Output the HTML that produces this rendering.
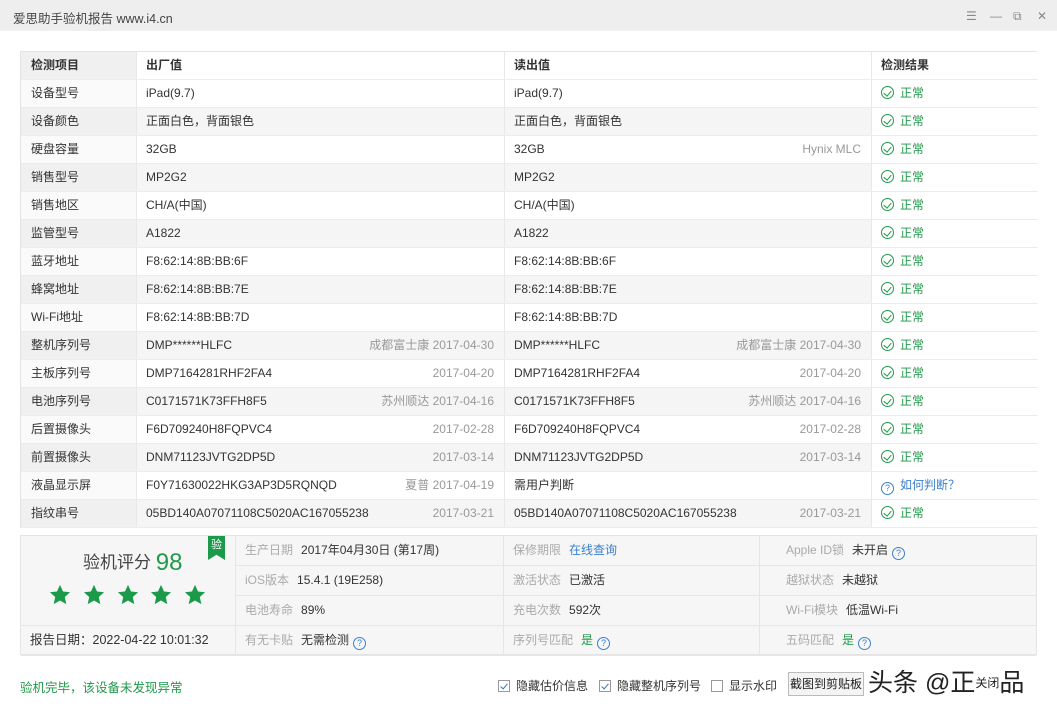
<!DOCTYPE html>
<html><head><meta charset="utf-8">
<style>
*{margin:0;padding:0;box-sizing:border-box}
body{width:1057px;height:720px;background:#fff;font-family:"Liberation Sans","Noto Sans CJK SC",sans-serif;font-size:12px;color:#333;position:relative;overflow:hidden}
.title{position:absolute;left:0;top:0;width:1057px;height:31px;background:#eeeeee;}
.title span{position:absolute;left:13px;top:8px;font-size:12.5px;color:#444}
.ctl{position:absolute;top:9px;color:#888;font-size:12px}
.tbl{position:absolute;left:20px;top:51px;width:1017px;border:1px solid #e4e4e4;border-bottom:none}
.row{height:28px;position:relative;border-bottom:1px solid #ececec}
.row.g{background:#f5f5f5}
.row div{position:absolute;top:0;height:27px;line-height:27px}
.c1{left:0;width:116px;padding-left:10px;background:rgba(0,0,0,0.02);border-right:1px solid #e8e8e8}
.c2{left:116px;width:368px;padding-left:9px;border-right:1px solid #e8e8e8}
.c3{left:484px;width:367px;padding-left:9px;border-right:1px solid #e8e8e8}
.c4{left:851px;width:166px;padding-left:9px;background:#fff}
.r{position:absolute;right:10px;top:0;color:#999}
.ok{color:#1f9a4a}
.ok i,.q{display:inline-block;width:13px;height:13px;border:1px solid #1f9a4a;border-radius:50%;vertical-align:-2px;margin-right:6px;position:relative}
.ok i:after{content:"";position:absolute;left:3px;top:2px;width:4px;height:6px;border:solid #1f9a4a;border-width:0 1.3px 1.3px 0;transform:rotate(40deg)}
.q{border-color:#3a7fd0;color:#3a7fd0;font-style:normal;font-size:9px;line-height:11px;text-align:center;margin:0 0 0 4px}
.h{font-weight:bold;color:#333}
.panel{position:absolute;left:20px;top:535px;width:1017px;height:120px;border:1px solid #e4e4e4;background:#f6f6f6}
.cell{position:absolute;height:30px;line-height:29px;border-bottom:1px solid #e6e6e6;border-right:1px solid #e6e6e6;padding-left:9px}
.lb{color:#aaa;margin-right:8px}
.v{color:#333}
.star{position:absolute;top:584px;width:22px;height:22px}
.cb{display:inline-block;width:12px;height:12px;border:1px solid #999;background:#fff;vertical-align:-2px;margin-right:6px;position:relative}
.cb.on:after{content:"";position:absolute;left:3px;top:1px;width:3px;height:6px;border:solid #3a6fc0;border-width:0 1.5px 1.5px 0;transform:rotate(40deg)}
</style></head><body>
<div class="title"><span>爱思助手验机报告 www.i4.cn</span>
<div class="ctl" style="left:966px">☰</div><div class="ctl" style="left:990px">—</div><div class="ctl" style="left:1013px">⧉</div><div class="ctl" style="left:1037px">✕</div></div>

<div class="tbl">
<div class="row g"><div class="c1 h">检测项目</div><div class="c2 h" style="background:#fff">出厂值</div><div class="c3 h" style="background:#fff">读出值</div><div class="c4 h">检测结果</div></div>
<div class="row"><div class="c1">设备型号</div><div class="c2">iPad(9.7)</div><div class="c3">iPad(9.7)</div><div class="c4 ok"><i></i>正常</div></div>
<div class="row g"><div class="c1">设备颜色</div><div class="c2">正面白色，背面银色</div><div class="c3">正面白色，背面银色</div><div class="c4 ok"><i></i>正常</div></div>
<div class="row"><div class="c1">硬盘容量</div><div class="c2">32GB</div><div class="c3">32GB<span class="r">Hynix MLC</span></div><div class="c4 ok"><i></i>正常</div></div>
<div class="row g"><div class="c1">销售型号</div><div class="c2">MP2G2</div><div class="c3">MP2G2</div><div class="c4 ok"><i></i>正常</div></div>
<div class="row"><div class="c1">销售地区</div><div class="c2">CH/A(中国)</div><div class="c3">CH/A(中国)</div><div class="c4 ok"><i></i>正常</div></div>
<div class="row g"><div class="c1">监管型号</div><div class="c2">A1822</div><div class="c3">A1822</div><div class="c4 ok"><i></i>正常</div></div>
<div class="row"><div class="c1">蓝牙地址</div><div class="c2">F8:62:14:8B:BB:6F</div><div class="c3">F8:62:14:8B:BB:6F</div><div class="c4 ok"><i></i>正常</div></div>
<div class="row g"><div class="c1">蜂窝地址</div><div class="c2">F8:62:14:8B:BB:7E</div><div class="c3">F8:62:14:8B:BB:7E</div><div class="c4 ok"><i></i>正常</div></div>
<div class="row"><div class="c1">Wi-Fi地址</div><div class="c2">F8:62:14:8B:BB:7D</div><div class="c3">F8:62:14:8B:BB:7D</div><div class="c4 ok"><i></i>正常</div></div>
<div class="row g"><div class="c1">整机序列号</div><div class="c2">DMP******HLFC<span class="r">成都富士康 2017-04-30</span></div><div class="c3">DMP******HLFC<span class="r">成都富士康 2017-04-30</span></div><div class="c4 ok"><i></i>正常</div></div>
<div class="row"><div class="c1">主板序列号</div><div class="c2">DMP7164281RHF2FA4<span class="r">2017-04-20</span></div><div class="c3">DMP7164281RHF2FA4<span class="r">2017-04-20</span></div><div class="c4 ok"><i></i>正常</div></div>
<div class="row g"><div class="c1">电池序列号</div><div class="c2">C0171571K73FFH8F5<span class="r">苏州顺达 2017-04-16</span></div><div class="c3">C0171571K73FFH8F5<span class="r">苏州顺达 2017-04-16</span></div><div class="c4 ok"><i></i>正常</div></div>
<div class="row"><div class="c1">后置摄像头</div><div class="c2">F6D709240H8FQPVC4<span class="r">2017-02-28</span></div><div class="c3">F6D709240H8FQPVC4<span class="r">2017-02-28</span></div><div class="c4 ok"><i></i>正常</div></div>
<div class="row g"><div class="c1">前置摄像头</div><div class="c2">DNM71123JVTG2DP5D<span class="r">2017-03-14</span></div><div class="c3">DNM71123JVTG2DP5D<span class="r">2017-03-14</span></div><div class="c4 ok"><i></i>正常</div></div>
<div class="row"><div class="c1">液晶显示屏</div><div class="c2">F0Y71630022HKG3AP3D5RQNQD<span class="r">夏普 2017-04-19</span></div><div class="c3">需用户判断</div><div class="c4" style="color:#3a7fd0"><i class="q" style="margin:0 6px 0 0">?</i>如何判断？</div></div>
<div class="row g"><div class="c1">指纹串号</div><div class="c2">05BD140A07071108C5020AC167055238<span class="r">2017-03-21</span></div><div class="c3">05BD140A07071108C5020AC167055238<span class="r">2017-03-21</span></div><div class="c4 ok"><i></i>正常</div></div>
</div>

<div class="panel">
<div class="cell" style="left:0;top:0;width:215px;height:90px;padding:0"></div>
<div style="position:absolute;left:62px;top:12px;font-size:17px;color:#444">验机评分 <span style="color:#1f9a4a;font-size:24px;vertical-align:-2px">98</span></div>
<div style="position:absolute;left:187px;top:0;width:17px;height:24px;background:#1a9a4a;color:#fff;font-size:11px;text-align:center;line-height:18px;clip-path:polygon(0 0,100% 0,100% 100%,50% 78%,0 100%)">验</div>
<div class="cell" style="left:0;top:90px;width:215px;font-size:12.5px;color:#333">报告日期：2022-04-22 10:01:32</div>
<div class="cell" style="left:215px;top:0;width:268px"><span class="lb">生产日期</span><span class="v">2017年04月30日 (第17周)</span></div>
<div class="cell" style="left:215px;top:30px;width:268px"><span class="lb">iOS版本</span><span class="v">15.4.1 (19E258)</span></div>
<div class="cell" style="left:215px;top:60px;width:268px"><span class="lb">电池寿命</span><span class="v">89%</span></div>
<div class="cell" style="left:215px;top:90px;width:268px"><span class="lb">有无卡贴</span><span class="v">无需检测</span><i class="q">?</i></div>
<div class="cell" style="left:483px;top:0;width:256px"><span class="lb">保修期限</span><span style="color:#3a7fd0">在线查询</span></div>
<div class="cell" style="left:483px;top:30px;width:256px"><span class="lb">激活状态</span><span class="v">已激活</span></div>
<div class="cell" style="left:483px;top:60px;width:256px"><span class="lb">充电次数</span><span class="v">592次</span></div>
<div class="cell" style="left:483px;top:90px;width:256px"><span class="lb">序列号匹配</span><span class="ok">是</span><i class="q">?</i></div>
<div class="cell" style="left:739px;top:0;width:276px;border-right:none;padding-left:26px"><span class="lb">Apple ID锁</span><span class="v">未开启</span><i class="q">?</i></div>
<div class="cell" style="left:739px;top:30px;width:276px;border-right:none;padding-left:26px"><span class="lb">越狱状态</span><span class="v">未越狱</span></div>
<div class="cell" style="left:739px;top:60px;width:276px;border-right:none;padding-left:26px"><span class="lb">Wi-Fi模块</span><span class="v">低温Wi-Fi</span></div>
<div class="cell" style="left:739px;top:90px;width:276px;border-right:none;padding-left:26px"><span class="lb">五码匹配</span><span class="ok">是</span><i class="q">?</i></div>
</div>
<svg class="star" style="left:49px" viewBox="0 0 24 24"><path d="M12 1l3.3 7.2 7.7.8-5.8 5.2 1.7 7.8L12 18l-6.9 4 1.7-7.8L1 9l7.7-.8z" fill="#1a9a4a"/></svg>
<svg class="star" style="left:83px" viewBox="0 0 24 24"><path d="M12 1l3.3 7.2 7.7.8-5.8 5.2 1.7 7.8L12 18l-6.9 4 1.7-7.8L1 9l7.7-.8z" fill="#1a9a4a"/></svg>
<svg class="star" style="left:117px" viewBox="0 0 24 24"><path d="M12 1l3.3 7.2 7.7.8-5.8 5.2 1.7 7.8L12 18l-6.9 4 1.7-7.8L1 9l7.7-.8z" fill="#1a9a4a"/></svg>
<svg class="star" style="left:150px" viewBox="0 0 24 24"><path d="M12 1l3.3 7.2 7.7.8-5.8 5.2 1.7 7.8L12 18l-6.9 4 1.7-7.8L1 9l7.7-.8z" fill="#1a9a4a"/></svg>
<svg class="star" style="left:184px" viewBox="0 0 24 24"><path d="M12 1l3.3 7.2 7.7.8-5.8 5.2 1.7 7.8L12 18l-6.9 4 1.7-7.8L1 9l7.7-.8z" fill="#1a9a4a"/></svg>

<div style="position:absolute;left:20px;top:677px;color:#1f9a4a;font-size:12.5px">验机完毕，该设备未发现异常</div>
<div style="position:absolute;left:498px;top:677px;font-size:12px;color:#333"><span class="cb on"></span>隐藏估价信息</div>
<div style="position:absolute;left:599px;top:677px;font-size:12px;color:#333"><span class="cb on"></span>隐藏整机序列号</div>
<div style="position:absolute;left:711px;top:677px;font-size:12px;color:#333"><span class="cb"></span>显示水印</div>
<div style="position:absolute;left:788px;top:672px;width:76px;height:24px;border:1px solid #bbb;background:#f4f4f4;font-size:12px;line-height:22px;text-align:center;color:#222">截图到剪贴板</div>
<div style="position:absolute;left:868px;top:668px;font-size:25px;color:#222;line-height:30px;background:#fff;padding-right:6px">头条 @正<span style="font-size:12px;vertical-align:4px">关闭</span>品</div>
</body></html>
